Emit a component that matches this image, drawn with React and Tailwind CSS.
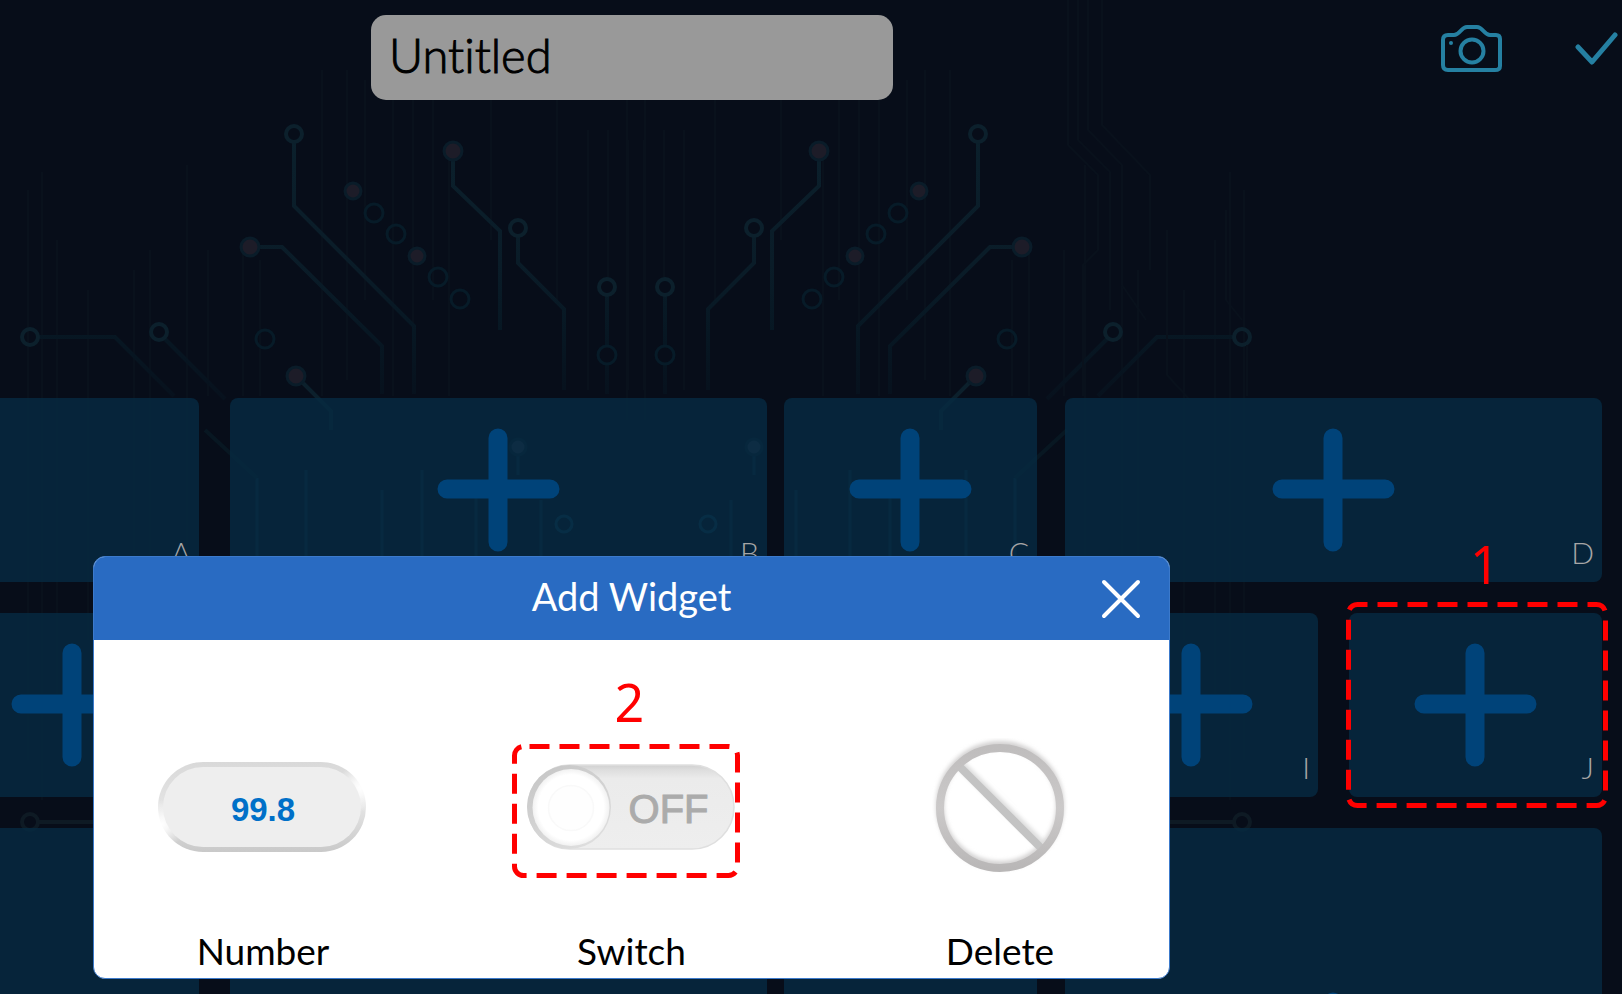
import React from "react";

const dots = [353, 417];
const rings = [[374, 213], [396, 234], [438, 277], [460, 299], [265, 339]];
const faintVerticals = [
  [28, 190, 760], [42, 172, 800], [57, 240, 700], [88, 290, 640], [134, 270, 620], [150, 250, 600], [187, 165, 580],
  [208, 250, 396], [243, 250, 396], [260, 260, 396], [322, 70, 396], [347, 70, 380], [365, 80, 300], [393, 100, 396],
  [413, 100, 360], [433, 100, 300], [449, 160, 396], [491, 100, 240], [557, 100, 300], [588, 130, 390], [608, 130, 280],
  [628, 140, 390], [645, 100, 420],
];

function HalfCircuit() {
  return (
    <g fill="none" stroke="#0c202c" strokeWidth="4">
      <g stroke="#09111c" strokeWidth="2">
        {faintVerticals.map(([x, y1, y2]) => (
          <path key={x} d={`M${x} ${y1}V${y2}`} />
        ))}
      </g>
      <g stroke="url(#trace)">
        <path d="M294 143V206L414 326V394" />
        <path d="M259 247H282L382 346V394" />
        <path d="M39 337H115L174 396" />
        <path d="M165 339L225 399" />
        <path d="M453 160V186L500 231V330" />
        <path d="M518 237V263L564 309V390" />
        <path d="M607 296V345M607 365V394" />
      </g>
      <path d="M302 382L331 411V430" />
      <g stroke="#0b3348" strokeWidth="3" opacity="0.7">
        <path d="M257 478V560M306 470V560M382 490V560M422 470V560M476 490V560M541 500V560M518 456V475" />
      </g>
      <path d="M205 430L257 478" stroke="#081722" />
      <circle cx="294" cy="134" r="8" />
      <circle cx="30" cy="337" r="8" />
      <circle cx="159" cy="332" r="8" />
      <circle cx="518" cy="228" r="8" />
      <circle cx="607" cy="287" r="8" />
      <circle cx="30" cy="822" r="8" stroke="#0e1a24" />
      <path d="M39 822H115L190 897" stroke="#0e1a24" />
      <g stroke="#071b28" strokeWidth="3">
        {rings.map(([x, y]) => <circle key={x} cx={x} cy={y} r="9" />)}
        <circle cx="607" cy="355" r="9" />
        <circle cx="564" cy="524" r="8" stroke="#0b3b50" />
      </g>
      <g fill="#1d1c28" stroke="#0a1c29" strokeWidth="3">
        {dots.map((x) => <circle key={x} cx={x} cy={x === 353 ? 191 : 256} r="8" />)}
        <circle cx="453" cy="151" r="9" />
        <circle cx="250" cy="247" r="9" />
        <circle cx="296" cy="376" r="9" />
        <circle cx="518" cy="447" r="8" fill="#2b3345" />
      </g>
    </g>
  );
}

function Circuit() {
  return (
    <svg className="absolute left-0 top-0" width="1622" height="994" viewBox="0 0 1622 994" aria-hidden="true">
      <defs>
        <linearGradient id="trace" gradientUnits="userSpaceOnUse" x1="0" y1="130" x2="0" y2="400">
          <stop offset="0" stopColor="#0b202c" />
          <stop offset="0.5" stopColor="#0a1c28" />
          <stop offset="0.75" stopColor="#071723" />
          <stop offset="1" stopColor="#07111d" />
        </linearGradient>
      </defs>
      <HalfCircuit />
      <g transform="translate(1272 0) scale(-1 1)"><HalfCircuit /></g>
      <g fill="none" stroke="#09111c" strokeWidth="2">
        <path d="M1068 0V145L1098 175V250L1083 265V396M1078 0V140L1110 172V310M1088 0V130L1122 165V285L1146 320M1102 0V125L1150 175V270M1167 230V375L1190 400M1226 210V300L1242 320M1247 345V396" />
      </g>
    </svg>
  );
}

function Plus() {
  return (
    <svg width="124" height="124" viewBox="0 0 124 124" aria-hidden="true">
      <path d="M61 10V114M10 61H113" stroke="#004379" strokeWidth="19" strokeLinecap="round" />
    </svg>
  );
}

function Callout({ number, width, height, dashOffset, className, numberClass }) {
  return (
    <div className={"pointer-events-none absolute " + className}>
      <span className={"absolute font-['Noto_Sans',sans-serif] text-[52px] leading-none text-[#ff0000] " + numberClass}>{number}</span>
      <svg className="block" width={width} height={height} aria-hidden="true">
        <rect x="2.5" y="2.5" width={width - 5} height={height - 5} rx="9" fill="none" stroke="#ff0000" strokeWidth="5" strokeDasharray="20 10" strokeDashoffset={dashOffset} />
      </svg>
    </div>
  );
}

function Slot({ label, className = "", plus = true, children }) {
  return (
    <button
      type="button"
      aria-label="Add widget"
      className={"relative flex items-center justify-center rounded-lg bg-[#062b42]/80 " + className}
    >
      {plus && <Plus />}
      {label && <span className="absolute bottom-2 right-2 pb-0.5 text-[30px] font-light leading-10 text-[#a6a6a6]">{label}</span>}
      {children}
    </button>
  );
}

function NumberIcon() {
  return (
    <svg width="210" height="92" viewBox="0 0 210 92" aria-hidden="true">
      <defs>
        <linearGradient id="pillEdge" x1="0" y1="0" x2="0" y2="1">
          <stop offset="0" stopColor="#d9d9d9" />
          <stop offset="0.5" stopColor="#e4e4e4" />
          <stop offset="1" stopColor="#c9c9c9" />
        </linearGradient>
        <radialGradient id="pillGlow">
          <stop offset="0" stopColor="#fff" />
          <stop offset="0.3" stopColor="#fff" stopOpacity="0.8" />
          <stop offset="1" stopColor="#fff" stopOpacity="0" />
        </radialGradient>
      </defs>
      <rect x="0" y="1" width="208" height="90" rx="45" fill="url(#pillEdge)" />
      <circle cx="202" cy="27" r="24" fill="url(#pillGlow)" />
      <circle cx="4" cy="63" r="24" fill="url(#pillGlow)" />
      <rect x="5" y="6" width="198" height="80" rx="40" fill="#eeeeee" />
    </svg>
  );
}

function SwitchIcon() {
  return (
    <svg width="210" height="86" viewBox="0 0 210 86" aria-hidden="true">
      <defs>
        <linearGradient id="track" x1="0" y1="0" x2="0" y2="1">
          <stop offset="0" stopColor="#d0d0d0" />
          <stop offset="0.06" stopColor="#dedede" />
          <stop offset="0.16" stopColor="#ebebeb" />
          <stop offset="1" stopColor="#eeeeee" />
        </linearGradient>
        <linearGradient id="knobRim" x1="0" y1="0" x2="0.6" y2="1">
          <stop offset="0" stopColor="#c4c4c4" />
          <stop offset="1" stopColor="#dddddd" />
        </linearGradient>
        <radialGradient id="knob">
          <stop offset="0.85" stopColor="#ffffff" />
          <stop offset="1" stopColor="#f1f1f1" />
        </radialGradient>
      </defs>
      <rect x="1" y="1" width="206" height="84" rx="42" fill="url(#track)" stroke="#dfdfdf" strokeWidth="1.5" />
      <circle cx="42" cy="43" r="42" fill="url(#knobRim)" />
      <circle cx="44" cy="43.500" r="38.500" fill="url(#knob)" />
      <circle cx="44" cy="44" r="22.500" fill="#fefefe" stroke="#f9f9f9" strokeWidth="1.5" />
    </svg>
  );
}

function DeleteIcon() {
  return (
    <svg width="136" height="138" viewBox="0 0 136 138" aria-hidden="true">
      <defs>
        <filter id="soft" x="-20%" y="-20%" width="140%" height="140%"><feGaussianBlur stdDeviation="2" /></filter>
        <linearGradient id="ring" x1="0" y1="0" x2="0" y2="1">
          <stop offset="0" stopColor="#bfbdbd" />
          <stop offset="0.5" stopColor="#cbc9c9" />
          <stop offset="1" stopColor="#b9b7b7" />
        </linearGradient>
      </defs>
      <g fill="none">
        <circle cx="68" cy="67" r="60" stroke="#d3d1d1" strokeWidth="8" filter="url(#soft)" />
        <path d="M28 26L112 109" stroke="#dddddd" strokeWidth="9" filter="url(#soft)" />
        <path d="M27 28L110 111" stroke="#c3c3c3" strokeWidth="8" />
        <circle cx="68" cy="70" r="60" stroke="url(#ring)" strokeWidth="8" />
      </g>
    </svg>
  );
}

function Widget({ name, children }) {
  return (
    <button type="button" aria-label={name} className="flex w-[210px] flex-col items-center">
      <span className="relative flex h-[138px] items-center justify-center">{children}</span>
      <span className="mt-[52px] text-[37px] leading-[45px] text-black">{name}</span>
    </button>
  );
}

export default function App() {
  return (
    <main className="relative h-screen w-full overflow-hidden bg-[#070d19] font-['Lato',sans-serif]">
      <Circuit />

      <header className="relative grid h-[398px] grid-cols-[371fr_522fr_729fr] items-start">
        <input
          aria-label="Dashboard name"
          defaultValue="Untitled"
          className="col-start-2 mt-[15px] h-[85px] w-full min-w-0 rounded-[15px] bg-[#999999] px-[18px] pb-1.5 text-[47px] font-light text-black outline-none [-webkit-text-stroke:1px_#000] [font-variant-ligatures:none]"
        />
        <div className="flex justify-end gap-[72px] pr-1 pt-6">
          <button type="button" aria-label="Take photo">
            <svg className="block" width="62" height="50" viewBox="0 0 62 50" fill="none" stroke="#2580a2" strokeWidth="4" aria-hidden="true">
              <path d="M8 11H14C20 11 21 3 27 3H37C43 3 44 11 50 11H56Q60 11 60 15V42Q60 46 55 46H8Q3 46 3 41V16Q3 11 8 11Z" />
              <circle cx="32" cy="27" r="11.500" />
              <circle cx="11" cy="19" r="2" fill="#2580a2" stroke="none" />
            </svg>
          </button>
          <button type="button" aria-label="Done">
            <svg className="block" width="44" height="50" viewBox="0 0 44 50" fill="none" stroke="#2580a2" strokeWidth="5" strokeLinecap="round" strokeLinejoin="round" aria-hidden="true">
              <path d="M4 23L18 38L41 11" />
            </svg>
          </button>
        </div>
      </header>

      <section aria-label="Widget slots" className="relative flex justify-end pr-5">
        <div className="mr-[17px] grid shrink-0 grid-cols-[repeat(4,253px)] grid-rows-[184px_184px_452px] gap-[31px]">
          <Slot label="A" className="col-span-2" />
          <Slot label="B" className="col-span-2" />
          <Slot />
          <Slot />
          <Slot />
          <Slot />
          <Slot className="col-span-2" plus={false} />
          <Slot className="col-span-2" plus={false} />
        </div>
        <div className="mr-7 grid shrink-0 grid-cols-[253px] grid-rows-[184px_184px_452px] gap-[31px]">
          <Slot label="C" />
          <Slot />
          <Slot plus={false} />
        </div>
        <div className="grid shrink-0 grid-cols-[253px_253px] grid-rows-[184px_184px_452px] gap-[31px]">
          <Slot label="D" className="col-span-2" />
          <Slot label="I" />
          <Slot label="J">
            <Callout number="1" width={262} height={206} dashOffset={-20} className="-left-[3px] -top-[11px]" numberClass="-top-[64px] left-[124px]" />
          </Slot>
          <Slot className="col-span-2" />
        </div>
      </section>

      <section role="dialog" aria-labelledby="add-widget" className="absolute left-[93px] top-[556px] w-[1077px] overflow-hidden rounded-xl border border-[#3c7acb] bg-white">
        <div className="relative flex h-[83px] items-center justify-center bg-[#296bc2]">
          <h1 id="add-widget" className="pb-1.5 text-[38px] font-normal leading-[46px] text-white">Add Widget</h1>
          <button type="button" aria-label="Close" className="absolute right-7 top-[22px]">
            <svg className="block" width="40" height="40" viewBox="0 0 40 40" aria-hidden="true">
              <path d="M3 3L37 37M37 3L3 37" stroke="#fff" strokeWidth="4" strokeLinecap="round" />
            </svg>
          </button>
        </div>
        <div className="flex justify-between px-16 pb-[5px] pt-[98px]">
          <Widget name="Number">
            <NumberIcon />
            <span className="absolute inset-0 flex items-center justify-center pt-1.5 font-['Liberation_Sans',sans-serif] text-[33px] font-bold text-[#0070c8]">99.8</span>
          </Widget>
          <Widget name="Switch">
            <SwitchIcon />
            <span className="absolute inset-y-0 right-7 flex items-center pt-1 font-['Liberation_Sans',sans-serif] text-[40px] text-[#ababab] [-webkit-text-stroke:1px_#ababab]">OFF</span>
            <Callout number="2" width={228} height={134} dashOffset={-6} className="-left-[15px] top-[6px]" numberClass="-top-[68px] left-[103px]" />
          </Widget>
          <Widget name="Delete">
            <DeleteIcon />
          </Widget>
        </div>
      </section>
    </main>
  );
}
